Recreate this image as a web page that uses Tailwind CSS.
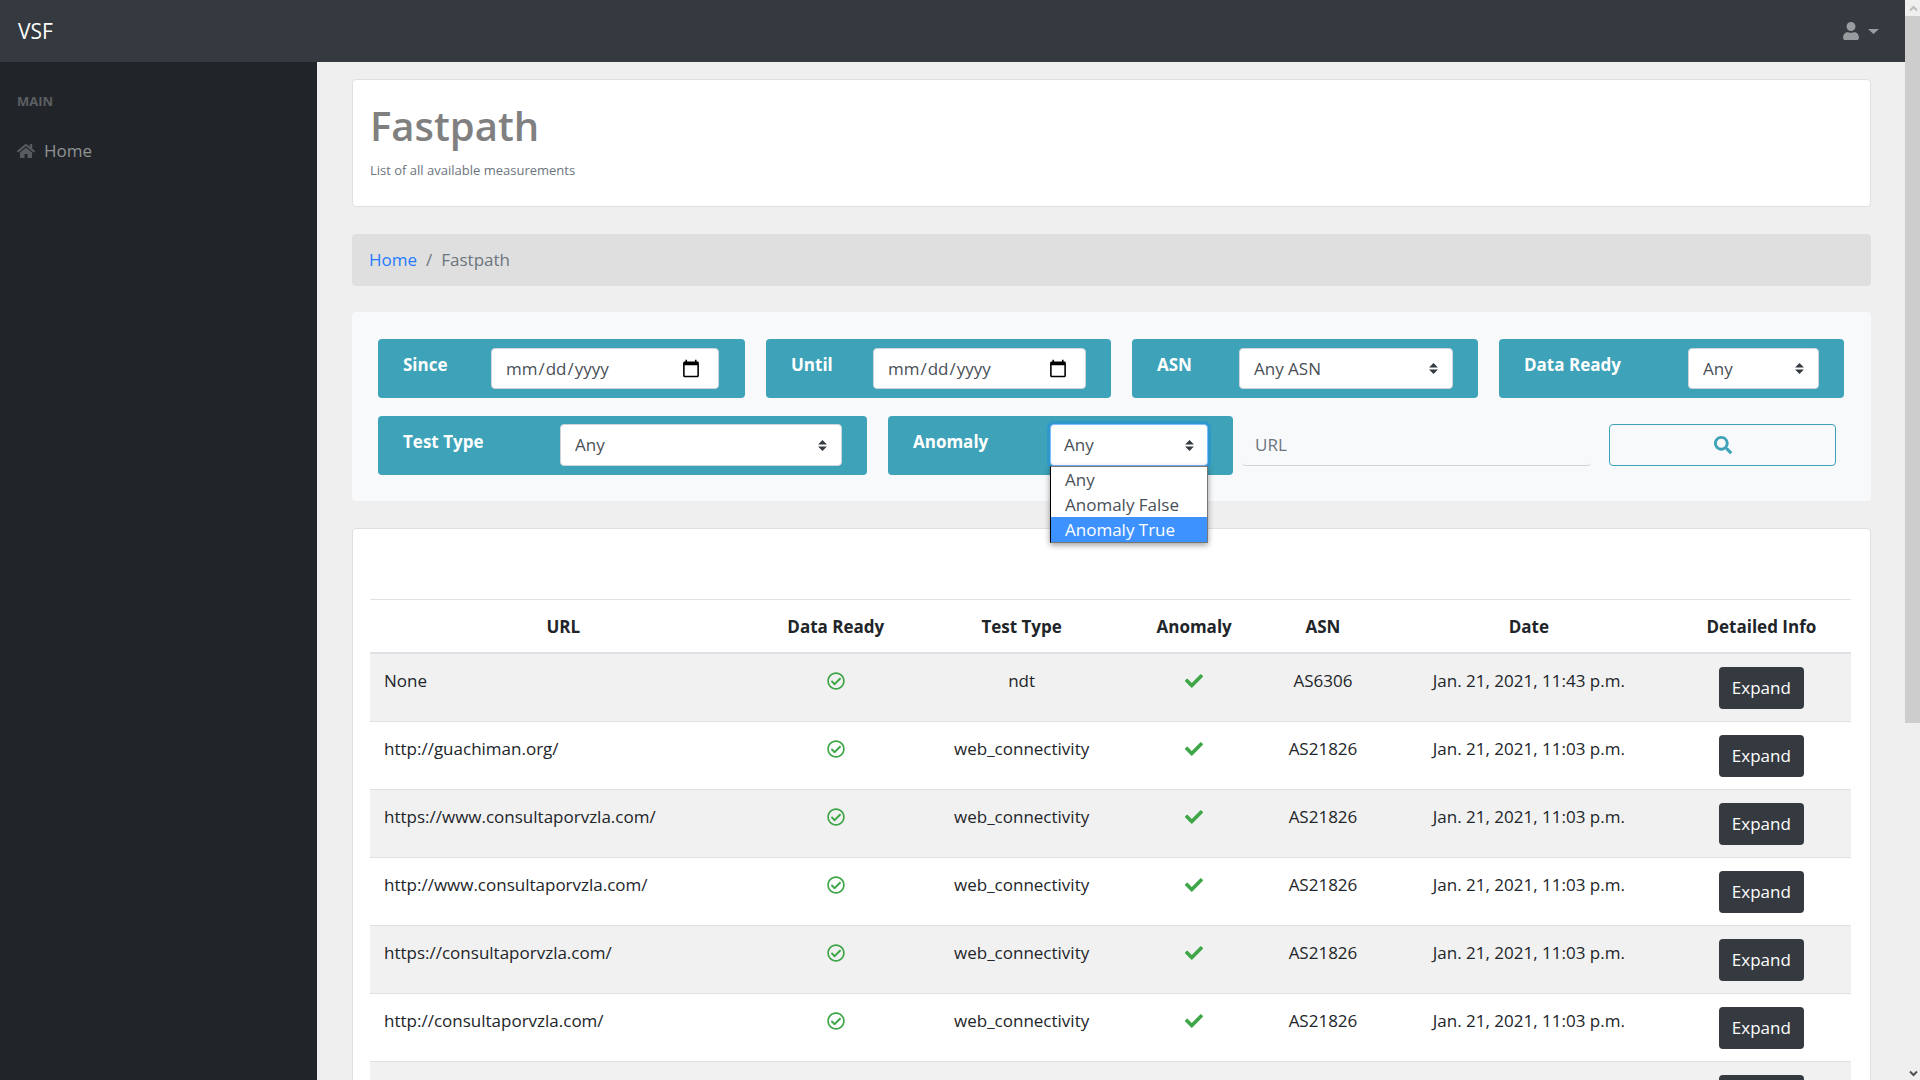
<!DOCTYPE html>
<html lang="en">
<head>
<meta charset="utf-8">
<title>VSF - Fastpath</title>
<script src="https://cdn.jsdelivr.net/npm/@tailwindcss/browser@4"></script>
</head>
<body class="h-screen flex overflow-hidden bg-[#efefef] font-['Open_Sans','Noto_Sans',sans-serif] text-[17px] leading-[26px] text-[#212529]">
<svg class="hidden">
  <symbol id="ok-circle" viewBox="0 0 512 512"><path d="M256 8C119.033 8 8 119.033 8 256s111.033 248 248 248 248-111.033 248-248S392.967 8 256 8zm0 48c110.532 0 200 89.451 200 200 0 110.532-89.451 200-200 200-110.532 0-200-89.451-200-200 0-110.532 89.451-200 200-200m140.204 130.267l-22.536-22.718c-4.667-4.705-12.265-4.736-16.97-.068L215.346 303.697l-59.792-60.277c-4.667-4.705-12.265-4.736-16.97-.069l-22.719 22.536c-4.705 4.667-4.736 12.265-.068 16.971l90.781 91.516c4.667 4.705 12.265 4.736 16.97.068l172.589-171.204c4.704-4.668 4.734-12.266.067-16.971z"/></symbol>
  <symbol id="check" viewBox="0 0 512 512"><path d="M173.898 439.404l-166.4-166.4c-9.997-9.997-9.997-26.206 0-36.204l36.203-36.204c9.997-9.998 26.207-9.998 36.204 0L192 312.69 432.095 72.596c9.997-9.997 26.207-9.997 36.204 0l36.203 36.204c9.997 9.997 9.997 26.206 0 36.204l-294.4 294.401c-9.998 9.997-26.207 9.997-36.204-.001z"/></symbol>
  <symbol id="sort" viewBox="0 0 4 5"><path d="M2 0L0 2h4zm0 5L0 3h4z"/></symbol>
</svg>

<div class="flex-1 min-w-0 flex flex-col">
  <header class="h-[62px] shrink-0 flex items-center justify-between bg-[#343a40] px-[18px]">
    <a href="#" class="text-[21px] text-white">VSF</a>
    <button type="button" aria-label="Account" class="flex items-center gap-[9px] mr-2 text-[#999c9f]">
      <svg class="w-4 h-[18px]" viewBox="0 0 448 512" fill="currentColor"><path d="M224 256c70.7 0 128-57.3 128-128S294.7 0 224 0 96 57.3 96 128s57.3 128 128 128zm89.600 32h-16.700c-22.200 10.200-46.900 16-72.900 16s-50.600-5.800-72.900-16h-16.700C60.200 288 0 348.200 0 422.400V464c0 26.500 21.500 48 48 48h352c26.500 0 48-21.500 48-48v-41.600c0-74.200-60.200-134.400-134.400-134.400z"/></svg>
      <svg class="w-[11px] h-[5px]" viewBox="0 0 11 5" fill="currentColor"><path d="M0 0h11L5.500 5z"/></svg>
    </button>
  </header>

  <div class="flex-1 min-h-0 flex">
    <nav class="w-[317px] shrink-0 bg-[#212529] px-[17px] pt-[26px]">
      <div class="text-[13px] font-bold text-[#5b5f62]">MAIN</div>
      <a href="#" class="mt-6 flex items-center gap-[9px] text-[#909294]">
        <svg class="w-[18px] h-4 text-[#595c5f]" viewBox="0 0 576 512" fill="currentColor"><path d="M280.370 148.260L96 300.110V464a16 16 0 0 0 16 16l112.060-.290a16 16 0 0 0 15.920-16V368a16 16 0 0 1 16-16h64a16 16 0 0 1 16 16v95.640a16 16 0 0 0 16 16.050L464 480a16 16 0 0 0 16-16V300L295.670 148.260a12.190 12.190 0 0 0-15.300 0zM571.600 251.470L488 182.560V44.050a12 12 0 0 0-12-12h-56a12 12 0 0 0-12 12v72.610L318.470 43a48 48 0 0 0-61 0L4.340 251.470a12 12 0 0 0-1.600 16.900l25.500 31A12 12 0 0 0 45.150 301l235.220-193.740a12.190 12.190 0 0 1 15.300 0L530.900 301a12 12 0 0 0 16.900-1.600l25.500-31a12 12 0 0 0-1.700-16.930z"/></svg>
        Home
      </a>
    </nav>

    <main class="flex-1 min-w-0 overflow-hidden pl-[35px] pr-[34px] pt-[17px]">
      <section class="bg-white border border-[#dfdfdf] rounded px-[17px] pt-[19px] pb-[22px]">
        <h1 class="text-[40px] leading-[53px] font-semibold text-[#808080]">Fastpath</h1>
        <p class="mt-1 text-[13px] leading-7 text-[#6c757d]">List of all available measurements</p>
      </section>

      <nav aria-label="Breadcrumb" class="mt-[27px] h-[52px] flex items-center gap-[9px] rounded bg-[#dfdfdf] px-[17px] text-[#6c757d]">
        <a href="#" class="text-[#267bff]">Home</a><span>/</span><span>Fastpath</span>
      </nav>

      <form class="mt-[26px] rounded bg-[#f8f9fb] pl-[26px] pr-[27px] pt-[27px] pb-[26px]">
        <div class="grid grid-cols-[367fr_345fr_346fr_345fr] gap-[21px]">
          <div class="h-[59px] flex justify-between rounded bg-[#3ea2b9] py-[9px] pl-[25px] pr-[26px]">
            <label for="since" class="pt-1 font-bold text-white">Since</label>
            <input id="since" type="date" class="w-[228px] h-[41px] rounded border border-[#ced4da] bg-white px-[13px] text-[#495057] [&::-webkit-calendar-picker-indicator]:w-5 [&::-webkit-calendar-picker-indicator]:h-5 [&::-webkit-calendar-picker-indicator]:mr-[2px]">
          </div>
          <div class="h-[59px] flex justify-between rounded bg-[#3ea2b9] py-[9px] px-[25px]">
            <label for="until" class="pt-1 font-bold text-white">Until</label>
            <input id="until" type="date" class="w-[213px] h-[41px] rounded border border-[#ced4da] bg-white px-[13px] text-[#495057] [&::-webkit-calendar-picker-indicator]:w-5 [&::-webkit-calendar-picker-indicator]:h-5 [&::-webkit-calendar-picker-indicator]:mr-[2px]">
          </div>
          <div class="h-[59px] flex justify-between rounded bg-[#3ea2b9] py-[9px] px-[25px]">
            <label for="asn" class="pt-1 font-bold text-white">ASN</label>
            <div class="relative">
              <select id="asn" class="w-[214px] h-[41px] appearance-none rounded border border-[#ced4da] bg-white px-[14px] text-[#495057]"><option>Any ASN</option></select>
              <svg class="absolute right-[15px] top-[15px] w-[9px] h-[11px] pointer-events-none" fill="#343a40"><use href="#sort"/></svg>
            </div>
          </div>
          <div class="h-[59px] flex justify-between rounded bg-[#3ea2b9] py-[9px] px-[25px]">
            <label for="ready" class="pt-1 font-bold text-white">Data Ready</label>
            <div class="relative">
              <select id="ready" class="w-[131px] h-[41px] appearance-none rounded border border-[#ced4da] bg-white px-[14px] text-[#495057]"><option>Any</option></select>
              <svg class="absolute right-[15px] top-[15px] w-[9px] h-[11px] pointer-events-none" fill="#343a40"><use href="#sort"/></svg>
            </div>
          </div>
        </div>
        <div class="mt-[18px] grid grid-cols-[489fr_345fr_590fr] gap-x-[21px]">
          <div class="h-[59px] flex justify-between rounded bg-[#3ea2b9] py-2 px-[25px]">
            <label for="type" class="pt-[5px] font-bold text-white">Test Type</label>
            <div class="relative">
              <select id="type" class="w-[282px] h-[42px] appearance-none rounded border border-[#ced4da] bg-white px-[14px] text-[#495057]"><option>Any</option></select>
              <svg class="absolute right-[15px] top-[16px] w-[9px] h-[11px] pointer-events-none" fill="#343a40"><use href="#sort"/></svg>
            </div>
          </div>
          <div class="h-[59px] flex justify-between rounded bg-[#3ea2b9] py-2 px-[25px]">
            <label for="anomaly" class="pt-[5px] font-bold text-white">Anomaly</label>
            <div class="relative">
              <select id="anomaly" class="w-[158px] h-[42px] appearance-none rounded border border-[#80bdff] bg-white px-[13px] text-[#495057] ring-3 ring-[#007bff]/25"><option>Any</option><option>Anomaly False</option><option>Anomaly True</option></select>
              <svg class="absolute right-[14px] top-[16px] w-[9px] h-[11px] pointer-events-none" fill="#343a40"><use href="#sort"/></svg>
              <ul class="absolute z-10 left-0 top-[42px] w-[158px] border border-[#767676] border-l-black bg-white leading-[25px] text-[#495057] shadow-[0_2px_6px] shadow-black/40">
                <li class="px-[14px]">Any</li>
                <li class="px-[14px]">Anomaly False</li>
                <li class="bg-[#3e92ff] px-[14px] text-white">Anomaly True</li>
              </ul>
            </div>
          </div>
          <div class="-ml-3 grid grid-cols-[349fr_227fr] gap-[18px] py-2 pr-2">
            <input type="text" aria-label="URL" placeholder="URL" class="min-w-0 h-[42px] rounded border-b border-[#ced4da] bg-transparent px-[13px] placeholder:text-[#6c757d]">
            <button type="submit" aria-label="Search" class="h-[42px] flex items-center justify-center rounded border border-[#3ea2b9] text-[#3ea2b9]">
              <svg class="w-[18px] h-[18px]" viewBox="0 0 512 512" fill="currentColor"><path d="M505 442.700L405.300 343c-4.500-4.500-10.600-7-17-7H372c27.600-35.300 44-79.700 44-128C416 93.100 322.900 0 208 0S0 93.100 0 208s93.100 208 208 208c48.300 0 92.700-16.400 128-44v16.300c0 6.400 2.500 12.500 7 17l99.700 99.700c9.400 9.400 24.600 9.400 33.900 0l28.300-28.300c9.400-9.400 9.400-24.600.1-34zM208 336c-70.700 0-128-57.200-128-128 0-70.700 57.200-128 128-128 70.700 0 128 57.200 128 128 0 70.700-57.200 128-128 128z"/></svg>
            </button>
          </div>
        </div>
      </form>

      <section class="mt-[27px] bg-white border border-[#dfdfdf] rounded pl-[17px] pr-[19px] pt-[70px]">
        <table class="w-full table-fixed border-separate border-spacing-0 text-center [&_td]:border-t [&_td]:border-[#dee2e6] [&_td]:pt-[13px] [&_td]:pb-3 [&_td]:align-top [&_td]:leading-7 [&_th]:border-t [&_th]:border-b-2 [&_th]:border-[#dee2e6] [&_th]:h-[55px] [&_th]:pt-[2px] [&_tbody_tr:first-child_td]:border-t-0 [&_tbody_tr:nth-child(odd)]:bg-[#f1f1f1] [&_td:first-child]:text-left [&_td:first-child]:pl-[14px] [&_td_svg]:mx-auto [&_td_svg]:mt-[5px] [&_td_svg]:w-[18px] [&_td_svg]:h-[18px] [&_td_svg]:fill-[#3fa648] [&_button]:h-[42px] [&_button]:w-[85px] [&_button]:rounded [&_button]:bg-[#343a40] [&_button]:text-white [&_button]:block [&_button]:mx-auto">
          <thead>
            <tr><th class="w-[26.1%]">URL</th><th class="w-[10.7%]">Data Ready</th><th class="w-[14.4%]">Test Type</th><th class="w-[8.9%]">Anomaly</th><th class="w-[8.5%]">ASN</th><th class="w-[19.3%]">Date</th><th>Detailed Info</th></tr>
          </thead>
          <tbody>
            <tr><td>None</td><td><svg><use href="#ok-circle"/></svg></td><td>ndt</td><td><svg><use href="#check"/></svg></td><td>AS6306</td><td>Jan. 21, 2021, 11:43 p.m.</td><td><button type="button">Expand</button></td></tr>
            <tr><td>http://guachiman.org/</td><td><svg><use href="#ok-circle"/></svg></td><td>web_connectivity</td><td><svg><use href="#check"/></svg></td><td>AS21826</td><td>Jan. 21, 2021, 11:03 p.m.</td><td><button type="button">Expand</button></td></tr>
            <tr><td>https://www.consultaporvzla.com/</td><td><svg><use href="#ok-circle"/></svg></td><td>web_connectivity</td><td><svg><use href="#check"/></svg></td><td>AS21826</td><td>Jan. 21, 2021, 11:03 p.m.</td><td><button type="button">Expand</button></td></tr>
            <tr><td>http://www.consultaporvzla.com/</td><td><svg><use href="#ok-circle"/></svg></td><td>web_connectivity</td><td><svg><use href="#check"/></svg></td><td>AS21826</td><td>Jan. 21, 2021, 11:03 p.m.</td><td><button type="button">Expand</button></td></tr>
            <tr><td>https://consultaporvzla.com/</td><td><svg><use href="#ok-circle"/></svg></td><td>web_connectivity</td><td><svg><use href="#check"/></svg></td><td>AS21826</td><td>Jan. 21, 2021, 11:03 p.m.</td><td><button type="button">Expand</button></td></tr>
            <tr><td>http://consultaporvzla.com/</td><td><svg><use href="#ok-circle"/></svg></td><td>web_connectivity</td><td><svg><use href="#check"/></svg></td><td>AS21826</td><td>Jan. 21, 2021, 11:03 p.m.</td><td><button type="button">Expand</button></td></tr>
            <tr><td></td><td></td><td></td><td></td><td></td><td></td><td><button type="button" aria-label="Expand"></button></td></tr>
          </tbody>
        </table>
      </section>
    </main>
  </div>
</div>

<!-- Page scrollbar -->
<div aria-hidden="true" class="w-[15px] shrink-0 flex flex-col bg-[#efefef]">
  <svg class="h-4 w-full" viewBox="0 0 15 16" fill="none" stroke="#bdbdbd" stroke-width="2"><path d="M5 10.500l3.500-3.500 3.500 3.500"/></svg>
  <div class="flex-1"><div class="h-[67.500%] bg-[#cdcdcd]"></div></div>
  <svg class="h-4 w-full" viewBox="0 0 15 16" fill="none" stroke="#505050" stroke-width="2"><path d="M5 7.500l3.500 3.500 3.500-3.500"/></svg>
</div>
</body>
</html>
